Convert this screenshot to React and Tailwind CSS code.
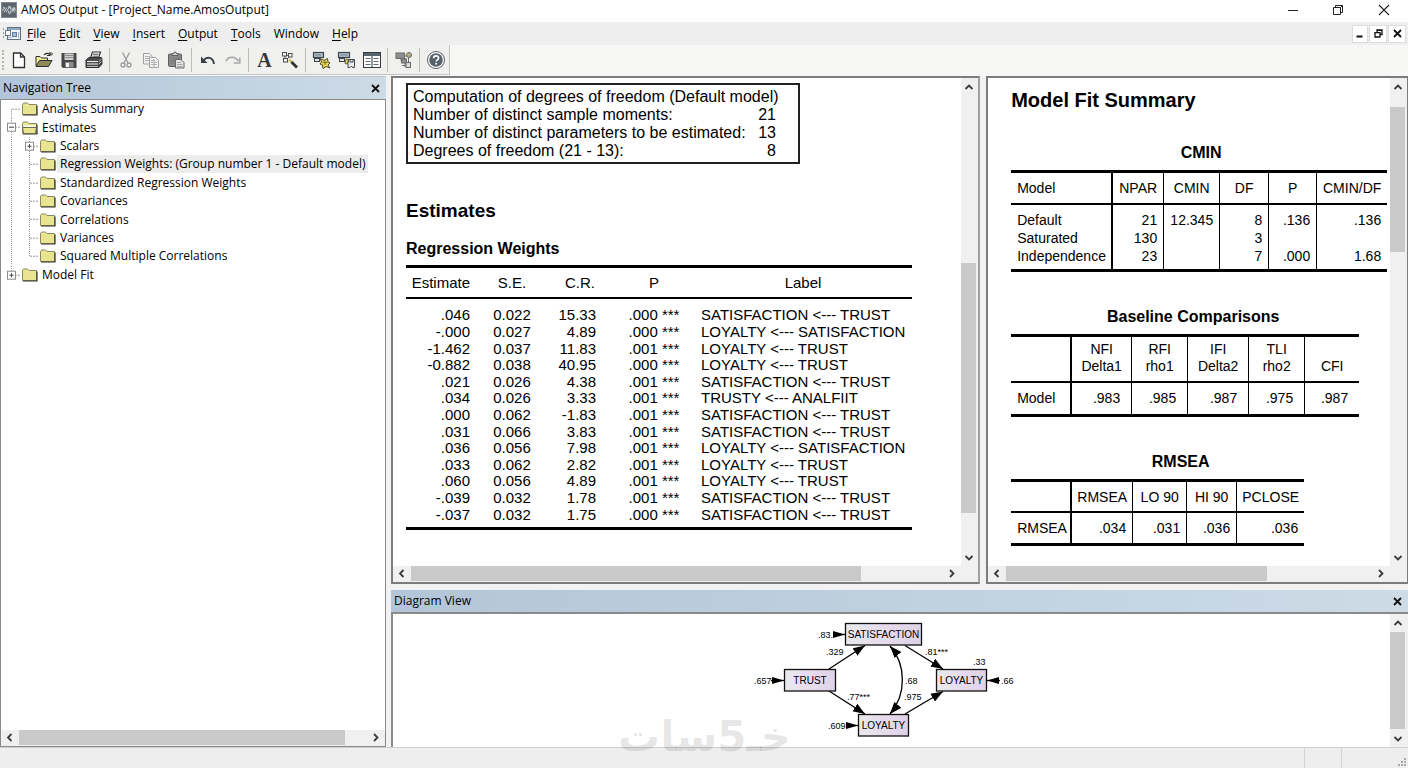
import React from 'react';

const strokeDark = '#2f2f2f';

/* ---------- icons ---------- */

function AppIcon() {
  return (
    <svg width="16" height="16" viewBox="0 0 16 16" aria-hidden="true">
      <rect width="16" height="16" fill="#5d646b" />
      <rect x="0.5" y="0.5" width="15" height="15" fill="none" stroke="#7f878e" />
      <path d="M1 8h2M13 8h2M3 5.5l3 5M6 5.5l-3 5M6.500 8l2-3 2 3-2 3zM10.500 5.500l3 5M13.500 5.500l-3 5" stroke="#c3ccd4" strokeWidth="1" fill="none" />
      <circle cx="3" cy="6" r="1.200" fill="#aeb8c1" />
      <circle cx="8.500" cy="5" r="1.200" fill="#c9d2da" />
      <circle cx="8.500" cy="11" r="1.200" fill="#aeb8c1" />
      <circle cx="13" cy="6.500" r="1.200" fill="#c9d2da" />
    </svg>
  );
}

function DocIcon() {
  return (
    <svg width="20" height="16" viewBox="0 0 20 16" aria-hidden="true">
      <path d="M1.500 2v2M1.500 6v2M1.500 10v2" stroke="#9a9a9a" />
      <rect x="5.500" y="1.500" width="13" height="12" fill="#eef4fa" stroke="#5d7083" />
      <rect x="6" y="2" width="12" height="2" fill="#8fa9c2" />
      <rect x="3.500" y="4.500" width="5" height="5" fill="#fff" stroke="#6d7780" />
      <rect x="10.500" y="6.500" width="4" height="4" fill="#9dbde0" stroke="#5d7fa3" />
      <path d="M16.500 6v6M6 11.500h4" stroke="#9fb2c4" />
    </svg>
  );
}

function NewIcon() {
  return (
    <svg width="20" height="20" viewBox="0 0 20 20" aria-hidden="true">
      <path d="M4.500 3h7l4 4v10.500h-11z" fill="#fff" stroke={strokeDark} strokeWidth="1.300" />
      <path d="M11.500 3v4h4" fill="none" stroke={strokeDark} strokeWidth="1.300" />
    </svg>
  );
}

function OpenIcon() {
  return (
    <svg width="20" height="20" viewBox="0 0 20 20" aria-hidden="true">
      <path d="M2 16V6.500h4l1.500 1.500h6v3" fill="#f3ec9c" stroke={strokeDark} />
      <path d="M2 16.500l3.500-6H18l-3.500 6z" fill="#8d8b58" stroke={strokeDark} />
      <path d="M10 5c1.500-2 4-2.200 5.500-.5M16 2v3.500h-3" fill="none" stroke={strokeDark} strokeWidth="1.100" />
      <circle cx="17.500" cy="4" r="1" fill="none" stroke={strokeDark} strokeWidth="0.800" />
    </svg>
  );
}

function SaveIcon() {
  return (
    <svg width="20" height="20" viewBox="0 0 20 20" aria-hidden="true">
      <path d="M2.500 3h15v15H4L2.500 16.500z" fill="#474747" />
      <rect x="5.500" y="3.500" width="9" height="6.500" fill="#cfcfcf" />
      <path d="M5.500 5.500h9M5.500 7.500h9" stroke="#8d8d8d" />
      <rect x="6" y="12" width="8.500" height="5.500" fill="#8a8a8a" />
      <rect x="7" y="13" width="3" height="4" fill="#f0f0f0" />
    </svg>
  );
}

function PrintIcon() {
  return (
    <svg width="20" height="20" viewBox="0 0 20 20" aria-hidden="true">
      <path d="M6.500 8l2-6h8l-2 6z" fill="#fff" stroke={strokeDark} strokeWidth="1.200" />
      <path d="M9 4.200h5.500M8.500 6.200h5.500" stroke={strokeDark} strokeWidth="0.900" />
      <path d="M2 10l3-2.500h12.500L18 9v5l-3 3.500H2z" fill="#4a4a4a" stroke={strokeDark} />
      <path d="M3 11.500h11M3 14h11" stroke="#f4f4f4" strokeWidth="1.200" />
      <path d="M15 11.500l2.500-2.500M15 14l2.500-2.500" stroke="#d0d0d0" strokeWidth="0.900" />
      <path d="M3 16.500h11" stroke="#cfcfcf" strokeWidth="0.800" />
    </svg>
  );
}

function CutIcon() {
  return (
    <svg width="20" height="20" viewBox="0 0 20 20" aria-hidden="true" fill="none" stroke="#9b9b9b" strokeWidth="1.300">
      <path d="M6.500 2.500l5.500 10.500M13.500 2.500L8 13" />
      <circle cx="7" cy="15" r="2" />
      <circle cx="13" cy="15" r="2" />
    </svg>
  );
}

function CopyIcon() {
  return (
    <svg width="20" height="20" viewBox="0 0 20 20" aria-hidden="true">
      <path d="M2.500 3.500h6l2.500 2.500v8H2.500z" fill="#f2f2f2" stroke="#a2a2a2" />
      <path d="M4 6.500h5M4 8.500h5M4 10.500h4" stroke="#b2b2b2" />
      <path d="M8.500 7.500h6l3 3v7h-9z" fill="#f2f2f2" stroke="#a2a2a2" />
      <path d="M10 10.500h4M10 12.500h6M10 14.500h6M13 9v8" stroke="#b2b2b2" />
    </svg>
  );
}

function PasteIcon() {
  return (
    <svg width="20" height="20" viewBox="0 0 20 20" aria-hidden="true">
      <rect x="2.500" y="4" width="13" height="12.500" rx="1" fill="#8a8a8a" stroke="#5e5e5e" />
      <path d="M6 5.500V3.500h1.500a1.500 1.500 0 013 0H12v2z" fill="#cfcfcf" stroke="#5e5e5e" />
      <path d="M4.500 8h9M4.500 10.500h5M4.500 13h4" stroke="#777" />
      <path d="M9.500 9.500h5.500l3 3v5.500H9.500z" fill="#e4e4e4" stroke="#6b6b6b" />
      <path d="M11 12.500h4M11 14.500h5.500M11 16.500h5.500" stroke="#a5a5a5" />
    </svg>
  );
}

function UndoIcon() {
  return (
    <svg width="20" height="20" viewBox="0 0 20 20" aria-hidden="true">
      <path d="M5.500 10.500c3-4 9.500-4 10.500 3.500" fill="none" stroke="#3a3f45" strokeWidth="1.900" />
      <path d="M3 6.500v6.500h6.500z" fill="#3a3f45" />
    </svg>
  );
}

function RedoIcon() {
  return (
    <svg width="20" height="20" viewBox="0 0 20 20" aria-hidden="true">
      <path d="M3 11c2.500-5 9-5 12.500 0" fill="none" stroke="#a6a6a6" strokeWidth="1.700" />
      <path d="M16.800 7.500v5.500h-6" fill="none" stroke="#a6a6a6" strokeWidth="1.500" />
    </svg>
  );
}

function WandIcon() {
  return (
    <svg width="20" height="20" viewBox="0 0 20 20" aria-hidden="true">
      <g fill="#f4f4f4" stroke="#4b4b4b">
        <rect x="2.500" y="2.500" width="4" height="3.500" />
        <rect x="8.500" y="3.500" width="3.500" height="3.500" />
        <rect x="3.500" y="8.500" width="4" height="3.500" />
      </g>
      <path d="M6.500 5l2 .5M5 6v2.500M9 7l-2 2" stroke="#4b4b4b" />
      <path d="M9 9.500l3 3" stroke="#cfc468" strokeWidth="2.500" />
      <path d="M11.500 12l5.500 5.500" stroke="#333" strokeWidth="2.800" />
    </svg>
  );
}

function ModelAddIcon() {
  return (
    <svg width="20" height="20" viewBox="0 0 20 20" aria-hidden="true">
      <rect x="1.500" y="2.500" width="10" height="5" fill="#aebfca" stroke="#3d444a" strokeWidth="1.200" />
      <path d="M3.500 5h6" stroke="#3d444a" strokeDasharray="1 1" />
      <rect x="2.500" y="8.500" width="5" height="3" fill="#dfe5e9" stroke="#3d444a" />
      <path d="M8 8.500l4 2 3.500-2 .5 3.500 2 1-2 2 2 3-4-1.500-3 2-.5-3.500-2.500-1 1.500-2z" fill="#e8d94e" stroke="#4f4a1c" />
      <path d="M10.500 12.500h5M13 11v4" stroke="#4f4a1c" strokeWidth="0.700" />
    </svg>
  );
}

function ModelSwapIcon() {
  return (
    <svg width="20" height="20" viewBox="0 0 20 20" aria-hidden="true">
      <rect x="1.500" y="2.500" width="11" height="5" fill="#aebfca" stroke="#3d444a" strokeWidth="1.200" />
      <path d="M3.500 5h7" stroke="#3d444a" strokeDasharray="1 1" />
      <rect x="2.500" y="8.500" width="5" height="3" fill="#dfe5e9" stroke="#3d444a" />
      <path d="M9 9l3 .5-2 4.500-2-.5z" fill="#e8d94e" stroke="#4f4a1c" strokeWidth="0.800" />
      <path d="M11.500 9.500h6v8h-2l-1-1.500-1.500 1.500h-2v-4z" fill="#e9edf0" stroke="#3d444a" />
      <path d="M13 9.500v2.500h3V9.500" fill="none" stroke="#3d444a" />
    </svg>
  );
}

function TableIcon() {
  return (
    <svg width="20" height="20" viewBox="0 0 20 20" aria-hidden="true">
      <rect x="1.500" y="2.500" width="17" height="15" fill="#fbfbfb" stroke="#343a40" />
      <rect x="2" y="3" width="16" height="3" fill="#59636c" />
      <path d="M3.500 8.500h5M3.500 11.500h5M3.500 14.500h5M11.500 8.500h5M11.500 11.500h5M11.500 14.500h5" stroke="#60686f" />
      <path d="M10 6v11" stroke="#343a40" />
    </svg>
  );
}

function TreeIcon() {
  return (
    <svg width="20" height="20" viewBox="0 0 20 20" aria-hidden="true">
      <rect x="2" y="3" width="8.500" height="5.500" fill="#8e8e8e" stroke="#6a6a6a" />
      <path d="M10.500 6h3M7 8.500V11h3M11 8v9" fill="none" stroke="#6a6a6a" />
      <circle cx="15" cy="5" r="2.500" fill="#b3ae84" stroke="#6a6a6a" />
      <rect x="7.500" y="9" width="5" height="4" fill="#8e8e8e" stroke="#6a6a6a" />
      <rect x="12" y="12.500" width="4.500" height="5" fill="#d9d9d9" stroke="#6a6a6a" />
      <path d="M8 15.500h4M14.500 8v4" stroke="#6a6a6a" />
    </svg>
  );
}

function HelpIcon() {
  return (
    <svg width="20" height="20" viewBox="0 0 20 20" aria-hidden="true">
      <circle cx="10" cy="10" r="8.500" fill="#fff" stroke="#5a5f64" strokeWidth="1" />
      <circle cx="10" cy="10" r="6.800" fill="#56626d" />
      <path d="M7.600 8.200c0-3.200 5-3 5-.2 0 1.800-2.400 1.800-2.400 3.600" fill="none" stroke="#fff" strokeWidth="1.600" />
      <circle cx="10.200" cy="13.800" r="1" fill="#fff" />
    </svg>
  );
}

function LetterIcon() {
  return <span className="font-['Liberation_Serif',serif] text-[20px] leading-5 font-bold text-[#33383d]">A</span>;
}

function Folder({ open }) {
  return (
    <svg width="16" height="14" viewBox="0 0 16 14" className="shrink-0" aria-hidden="true">
      <path d="M0.500 12.500V2.500l1-1.500h4l1.500 1.500h7.500v10z" fill="#e9e48f" stroke="#8a8864" />
      <path d="M1 13h14V3.500" fill="none" stroke="#37372b" strokeWidth="1.200" />
      {open && (
        <>
          <path d="M1.500 4.500h12v2h-12z" fill="#fbfbf0" />
          <path d="M0.500 6.500h14l-1 6H1.500z" fill="#e9e48f" stroke="#6b6a4c" />
        </>
      )}
    </svg>
  );
}

function Chevron({ dir }) {
  const d = {
    up: 'M1.500 6L5 2.500 8.500 6',
    down: 'M1.500 3L5 6.500 8.500 3',
    left: 'M6.500 1L3 4.500 6.500 8',
    right: 'M3 1l3.500 3.500L3 8',
  }[dir];
  return (
    <svg width="10" height="9" viewBox="0 0 10 9" aria-hidden="true">
      <path d={d} fill="none" stroke="#3c3c3c" strokeWidth="1.800" />
    </svg>
  );
}

function CloseGlyph() {
  return (
    <svg width="9" height="9" viewBox="0 0 9 9" aria-hidden="true">
      <path d="M1 1l7 7M8 1L1 8" stroke="#111" strokeWidth="1.800" />
    </svg>
  );
}

/* ---------- scroll bars ---------- */

function VScroll({ before, thumb, after }) {
  return (
    <div className="flex w-[15px] shrink-0 flex-col bg-[#f0f0f0]">
      <button type="button" aria-label="Scroll up" className="flex h-[18px] items-center justify-center"><Chevron dir="up" /></button>
      <div className={before} />
      <div className={`bg-[#c9c9c9] ${thumb}`} />
      <div className={after} />
      <button type="button" aria-label="Scroll down" className="flex h-[18px] items-center justify-center"><Chevron dir="down" /></button>
    </div>
  );
}

function HScroll({ thumb, after, corner }) {
  return (
    <div className="flex h-[15px] shrink-0 bg-[#f0f0f0]">
      <button type="button" aria-label="Scroll left" className="flex w-[18px] items-center justify-center"><Chevron dir="left" /></button>
      <div className={`bg-[#c9c9c9] ${thumb}`} />
      <div className={after} />
      <button type="button" aria-label="Scroll right" className="flex w-[18px] items-center justify-center"><Chevron dir="right" /></button>
      {corner && <div className="w-[17px]" />}
    </div>
  );
}

/* ---------- window chrome ---------- */

function TitleBar() {
  return (
    <header className="flex h-[22px] items-center bg-white pb-0.5 pl-px">
      <AppIcon />
      <h1 className="ml-1 text-[12px] leading-4">AMOS Output - [Project_Name.AmosOutput]</h1>
      <div className="ml-auto flex">
        <button type="button" aria-label="Minimize" className="flex h-5 w-[45px] items-center justify-center">
          <svg width="12" height="12" viewBox="0 0 12 12"><path d="M1 6.500h10" stroke="#222" /></svg>
        </button>
        <button type="button" aria-label="Restore" className="flex h-5 w-[45px] items-center justify-center">
          <svg width="12" height="12" viewBox="0 0 12 12" fill="none" stroke="#222"><path d="M1.500 3.500h7v7h-7zM3.500 3.500v-2h7v7h-2M8.500 3.500l2-2" /></svg>
        </button>
        <button type="button" aria-label="Close" className="flex h-5 w-[48px] items-center justify-center">
          <svg width="12" height="12" viewBox="0 0 12 12"><path d="M1 1l10 10M11 1L1 11" stroke="#222" strokeWidth="1.100" /></svg>
        </button>
      </div>
    </header>
  );
}

const menus = [
  ['F', 'ile'], ['E', 'dit'], ['V', 'iew'], ['I', 'nsert'],
  ['O', 'utput'], ['T', 'ools'], ['', 'Window'], ['H', 'elp'],
];

function MenuBar() {
  return (
    <nav aria-label="Main menu" className="flex h-[23px] items-center bg-[#eeeeee] pl-0.5">
      <DocIcon />
      <div className="ml-[5px] flex gap-[13px]">
        {menus.map(([key, rest]) => (
          <button type="button" key={rest} className="text-[12px] leading-4">
            <u className="underline-offset-2">{key}</u>{rest}
          </button>
        ))}
      </div>
      <div className="ml-auto flex gap-px pr-0.5">
        <button type="button" aria-label="Minimize document" className="flex h-[18px] w-4 items-center justify-center border border-[#dddddd] bg-white">
          <svg width="8" height="8" viewBox="0 0 8 8"><path d="M0.500 6.500h6" stroke="#111" strokeWidth="2" /></svg>
        </button>
        <button type="button" aria-label="Restore document" className="flex h-[18px] w-[18px] items-center justify-center border border-[#dddddd] bg-white">
          <svg width="9" height="9" viewBox="0 0 9 9" fill="none" stroke="#111" strokeWidth="1.300"><path d="M1 3.700h5V8H1zM3 3.500V1h5v4.500H6M3 1.300h5" /></svg>
        </button>
        <button type="button" aria-label="Close document" className="flex h-[18px] w-[18px] items-center justify-center border border-[#dddddd] bg-white">
          <CloseGlyph />
        </button>
      </div>
    </nav>
  );
}

const toolGroups = [
  [['New', NewIcon], ['Open', OpenIcon], ['Save', SaveIcon], ['Print', PrintIcon]],
  [['Cut', CutIcon], ['Copy', CopyIcon], ['Paste', PasteIcon]],
  [['Undo', UndoIcon], ['Redo', RedoIcon]],
  [['Font', LetterIcon], ['Wizard', WandIcon]],
  [['Add model', ModelAddIcon], ['Swap model', ModelSwapIcon], ['Table view', TableIcon]],
  [['Tree view', TreeIcon]],
  [['Help', HelpIcon]],
];

function Toolbar() {
  return (
    <div className="h-[31px] bg-[#f7f7f6]">
      <div role="toolbar" aria-label="Standard" className="flex h-[30px] w-fit items-center border-r border-b border-[#c4c4c4] bg-[#f0f0ef] pr-px pl-0.5">
        <div className="mr-px h-5 w-[3px] border-l-2 border-dotted border-[#b5b5b5]" />
        {toolGroups.map((group, i) => (
          <div key={group[0][0]} className="flex items-center">
            {i > 0 && <div className="mx-[3px] h-6 w-px bg-[#bdbdbd]" />}
            {group.map(([name, Icon]) => (
              <button type="button" key={name} aria-label={name} className="flex h-6 w-[25px] items-center justify-center">
                <Icon />
              </button>
            ))}
          </div>
        ))}
      </div>
    </div>
  );
}

function PanelHeader({ title, id }) {
  return (
    <div className="flex h-[22px] shrink-0 items-center justify-between bg-linear-to-r from-[#b3c5d8] to-[#ccdbe6] pr-[6px] pl-[3px]">
      <h2 id={id} className="text-[12px] leading-4">{title}</h2>
      <button type="button" aria-label={`Close ${title}`} className="flex h-4 w-[9px] items-center"><CloseGlyph /></button>
    </div>
  );
}

/* ---------- navigation tree ---------- */

const tree = [
  { label: 'Analysis Summary', guides: ['first'] },
  { label: 'Estimates', guides: ['minus'], open: true },
  { label: 'Scalars', guides: ['line', 'plus'] },
  { label: 'Regression Weights: (Group number 1 - Default model)', guides: ['line', 'tee'], selected: true },
  { label: 'Standardized Regression Weights', guides: ['line', 'tee'] },
  { label: 'Covariances', guides: ['line', 'tee'] },
  { label: 'Correlations', guides: ['line', 'tee'] },
  { label: 'Variances', guides: ['line', 'tee'] },
  { label: 'Squared Multiple Correlations', guides: ['line', 'end'] },
  { label: 'Model Fit', guides: ['plusEnd'] },
];

function Guide({ kind }) {
  const top = kind === 'first' ? '50%' : '0';
  const bottom = kind === 'end' || kind === 'plusEnd' ? '50%' : '100%';
  const boxed = kind === 'minus' || kind === 'plus' || kind === 'plusEnd';
  return (
    <svg className="h-full w-[18px] shrink-0" aria-hidden="true">
      <line x1="9.500" x2="9.500" y1={top} y2={bottom} stroke="#9a9a9a" strokeDasharray="1 1" />
      {kind !== 'line' && <line x1="10" x2="19" y1="50%" y2="50%" stroke="#9a9a9a" strokeDasharray="2 1" />}
      {boxed && (
        <svg y="50%" className="overflow-visible">
          <rect x="5.500" y="-4" width="8" height="8" fill="#fff" stroke="#8c8c8c" />
          <path d={kind === 'minus' ? 'M7 0h5' : 'M7.500 0h4M9.500-2v4'} stroke="#444" />
        </svg>
      )}
    </svg>
  );
}

function NavigationTree() {
  return (
    <aside aria-labelledby="nav-title" className="flex w-[386px] shrink-0 flex-col border-t border-[#b9c2ca]">
      <PanelHeader title="Navigation Tree" id="nav-title" />
      <div className="flex flex-1 flex-col border border-[#8a8a8a] bg-white">
        <ul role="tree" className="grid h-[184px] auto-rows-fr pl-px">
          {tree.map((node) => (
            <li key={node.label} role="treeitem" aria-selected={!!node.selected} className="flex items-center">
              {node.guides.map((kind, i) => <Guide key={i} kind={kind} />)}
              <span className="ml-0.5 flex"><Folder open={node.open} /></span>
              <span className={node.selected ? 'ml-px bg-[#ececec] px-[3px] text-[12px] leading-[18px] whitespace-nowrap' : 'ml-1 text-[12px] leading-[18px] whitespace-nowrap'}>{node.label}</span>
            </li>
          ))}
        </ul>
        <div className="flex-1" />
        <HScroll thumb="flex-[325_1_0%]" after="flex-[22_1_0%]" />
        <div className="h-px bg-[#f0f0f0]" />
      </div>
    </aside>
  );
}

/* ---------- estimates document ---------- */

const dof = [
  ['Number of distinct sample moments:', '21'],
  ['Number of distinct parameters to be estimated:', '13'],
  ['Degrees of freedom (21 - 13):', '8'],
];

const weights = [
  ['.046', '0.022', '15.33', '.000 ***', 'SATISFACTION <--- TRUST'],
  ['-.000', '0.027', '4.89', '.000 ***', 'LOYALTY <--- SATISFACTION'],
  ['-1.462', '0.037', '11.83', '.001 ***', 'LOYALTY <--- TRUST'],
  ['-0.882', '0.038', '40.95', '.000 ***', 'LOYALTY <--- TRUST'],
  ['.021', '0.026', '4.38', '.001 ***', 'SATISFACTION <--- TRUST'],
  ['.034', '0.026', '3.33', '.001 ***', 'TRUSTY <--- ANALFIIT'],
  ['.000', '0.062', '-1.83', '.001 ***', 'SATISFACTION <--- TRUST'],
  ['.031', '0.066', '3.83', '.001 ***', 'SATISFACTION <--- TRUST'],
  ['.036', '0.056', '7.98', '.001 ***', 'LOYALTY <--- SATISFACTION'],
  ['.033', '0.062', '2.82', '.001 ***', 'LOYALTY <--- TRUST'],
  ['.060', '0.056', '4.89', '.001 ***', 'LOYALTY <--- TRUST'],
  ['-.039', '0.032', '1.78', '.001 ***', 'SATISFACTION <--- TRUST'],
  ['-.037', '0.032', '1.75', '.000 ***', 'SATISFACTION <--- TRUST'],
];

function EstimatesDocument() {
  return (
    <section className="flex min-w-0 flex-[584_1_0%] flex-col border-2 border-[#7c7c7c] border-r-[#a0a0a0] bg-white">
      <div className="flex flex-1">
        <div className="min-w-0 flex-1 pt-[5px] pl-[13px] font-['Liberation_Sans',Arial,sans-serif]">
          <div className="w-[394px] border-2 border-[#222] pt-[3px] pr-[22px] pb-0.5 pl-[5px] text-[16px] leading-[18px]">
            <p className="whitespace-nowrap">Computation of degrees of freedom (Default model)</p>
            <dl>
              {dof.map(([name, value]) => (
                <div key={name} className="flex justify-between">
                  <dt className="whitespace-nowrap">{name}</dt>
                  <dd>{value}</dd>
                </div>
              ))}
            </dl>
          </div>
          <h2 className="mt-[35px] text-[19px] leading-6 font-bold">Estimates</h2>
          <h3 className="mt-4 text-[16px] leading-5 font-bold">Regression Weights</h3>
          <table className="mt-[6px] h-[265px] w-[506px] table-fixed border-separate border-spacing-0 border-y-3 border-black text-[15px] leading-4">
            <colgroup>
              <col className="w-[80px]" />
              <col className="w-[52px]" />
              <col className="w-[84px]" />
              <col className="w-[64px]" />
              <col />
            </colgroup>
            <thead>
              <tr className="h-[31px]">
                <th className="border-b-2 border-black pr-4 text-right font-normal">Estimate</th>
                <th className="border-b-2 border-black font-normal">S.E.</th>
                <th className="border-b-2 border-black font-normal">C.R.</th>
                <th className="border-b-2 border-black font-normal">P</th>
                <th className="border-b-2 border-black pl-2 font-normal">Label</th>
              </tr>
              <tr className="h-2"><td colSpan={5} /></tr>
            </thead>
            <tbody>
              {weights.map((row, i) => (
                <tr key={i}>
                  <td className="pr-4 text-right">{row[0]}</td>
                  <td className="text-center">{row[1]}</td>
                  <td className="pr-[26px] text-right">{row[2]}</td>
                  <td className="text-center whitespace-nowrap">{row[3]}</td>
                  <td className="pl-[15px] whitespace-nowrap">{row[4]}</td>
                </tr>
              ))}
            </tbody>
            <tfoot>
              <tr className="h-1"><td colSpan={5} /></tr>
            </tfoot>
          </table>
        </div>
        <VScroll before="flex-[166_1_0%]" thumb="flex-[249_1_0%]" after="flex-[35_1_0%]" />
        <div className="w-0.5 bg-[#f0f0f0]" />
      </div>
      <HScroll thumb="flex-[449_1_0%]" after="flex-[82_1_0%]" corner />
      <div className="h-px bg-[#f0f0f0]" />
    </section>
  );
}

/* ---------- model fit document ---------- */

function CminTable() {
  const rows = [
    ['Default', '21', '12.345', '8', '.136', '.136'],
    ['Saturated', '130', '', '3', '', ''],
    ['Independence', '23', '', '7', '.000', '1.68'],
  ];
  const pad = ['pt-[6px]', '', 'pb-1'];
  return (
    <table className="w-[376px] table-fixed border-separate border-spacing-0 border-y-3 border-black text-[14px] leading-[18px]">
      <colgroup>
        <col className="w-[102px]" /><col className="w-[51px]" /><col className="w-[56px]" />
        <col className="w-[49px]" /><col className="w-[48px]" /><col />
      </colgroup>
      <thead>
        <tr className="h-[32px]">
          <th className="border-r-2 border-b-2 border-black pl-[6px] text-left font-normal">Model</th>
          <th className="border-r border-b-2 border-black font-normal">NPAR</th>
          <th className="border-r border-b-2 border-black font-normal">CMIN</th>
          <th className="border-r border-b-2 border-black font-normal">DF</th>
          <th className="border-r border-b-2 border-black font-normal">P</th>
          <th className="border-b-2 border-black font-normal">CMIN/DF</th>
        </tr>
      </thead>
      <tbody>
        {rows.map((row, i) => (
          <tr key={row[0]}>
            <th className={`border-r-2 border-black pl-[6px] text-left font-normal ${pad[i]}`}>{row[0]}</th>
            {row.slice(1).map((value, j) => (
              <td key={j} className={`border-black pr-[6px] text-right ${j < 4 ? 'border-r' : ''} ${pad[i]}`}>{value}</td>
            ))}
          </tr>
        ))}
      </tbody>
    </table>
  );
}

function BaselineTable() {
  const heads = [['NFI', 'Delta1'], ['RFI', 'rho1'], ['IFI', 'Delta2'], ['TLI', 'rho2'], ['', 'CFI']];
  const values = ['.983', '.985', '.987', '.975', '.987'];
  return (
    <table className="w-[348px] table-fixed border-separate border-spacing-0 border-y-3 border-black text-[14px] leading-[17px]">
      <colgroup>
        <col className="w-[61px]" /><col className="w-[60px]" /><col className="w-[56px]" />
        <col className="w-[61px]" /><col className="w-[56px]" /><col />
      </colgroup>
      <thead>
        <tr className="h-[46px] align-bottom">
          <th className="border-r-2 border-b-2 border-black" />
          {heads.map(([a, b], j) => (
            <th key={b} className={`border-b-2 border-black pb-[6px] font-normal ${j < 4 ? 'border-r' : ''}`}>
              {a && <>{a}<br /></>}{b}
            </th>
          ))}
        </tr>
      </thead>
      <tbody>
        <tr className="h-[31px]">
          <th className="border-r-2 border-black pl-[6px] text-left font-normal">Model</th>
          {values.map((value, j) => (
            <td key={j} className={`border-black pr-[11px] text-right ${j < 4 ? 'border-r' : ''}`}>{value}</td>
          ))}
        </tr>
      </tbody>
    </table>
  );
}

function RmseaTable() {
  const heads = ['RMSEA', 'LO 90', 'HI 90', 'PCLOSE'];
  const values = ['.034', '.031', '.036', '.036'];
  return (
    <table className="w-[293px] table-fixed border-separate border-spacing-0 border-y-3 border-black text-[14px] leading-[18px]">
      <colgroup>
        <col className="w-[61px]" /><col className="w-[61px]" /><col className="w-[54px]" />
        <col className="w-[50px]" /><col />
      </colgroup>
      <thead>
        <tr className="h-[31px]">
          <th className="border-r-2 border-b-2 border-black" />
          {heads.map((head, j) => (
            <th key={head} className={`border-b-2 border-black font-normal whitespace-nowrap ${j < 3 ? 'border-r' : ''}`}>{head}</th>
          ))}
        </tr>
      </thead>
      <tbody>
        <tr className="h-[30px]">
          <th className="border-r-2 border-black pl-[6px] text-left font-normal">RMSEA</th>
          {values.map((value, j) => (
            <td key={j} className={`border-black pr-[6px] text-right ${j < 3 ? 'border-r' : ''}`}>{value}</td>
          ))}
        </tr>
      </tbody>
    </table>
  );
}

function ModelFitDocument() {
  return (
    <section className="flex min-w-0 flex-[418_1_0%] flex-col border-2 border-r border-[#7c7c7c] bg-white">
      <div className="flex flex-1">
        <div className="min-w-0 flex-1 pt-[10px] pl-[23px] font-['Liberation_Sans',Arial,sans-serif]">
          <h2 className="text-[20px] leading-6 font-bold">Model Fit Summary</h2>
          <h3 className="mt-[31px] mb-[7px] w-[376px] pl-1 text-center text-[16px] leading-5 font-bold">CMIN</h3>
          <CminTable />
          <h3 className="mt-[35px] mb-[7px] w-[348px] pl-4 text-center text-[16px] leading-5 font-bold">Baseline Comparisons</h3>
          <BaselineTable />
          <h3 className="mt-[35px] mb-[7px] w-[293px] pl-[46px] text-center text-[16px] leading-5 font-bold">RMSEA</h3>
          <RmseaTable />
        </div>
        <VScroll before="flex-[11_1_0%]" thumb="flex-[144_1_0%]" after="flex-[295_1_0%]" />
        <div className="w-0.5 bg-[#f0f0f0]" />
      </div>
      <HScroll thumb="flex-[260_1_0%]" after="flex-[104_1_0%]" corner />
      <div className="h-px bg-[#f0f0f0]" />
    </section>
  );
}

/* ---------- diagram ---------- */

const nodes = [
  { x: 90.5, y: 3.5, w: 76, label: 'SATISFACTION' },
  { x: 29.5, y: 49.5, w: 51, label: 'TRUST' },
  { x: 181.5, y: 49.5, w: 50, label: 'LOYALTY' },
  { x: 103.5, y: 94.5, w: 50, label: 'LOYALTY' },
];

const edgeLabels = [
  [63, 18, '.83.'], [71, 35, '.329'], [170, 35, '.81***'], [218, 45, '.33'],
  [-1, 64, '.657'], [246, 64, '.66'], [150, 64, '.68'],
  [92, 80, '.77***'], [149, 80, '.975'], [73, 109, '.609'],
];

function PathDiagram() {
  return (
    <svg width="262" height="120" viewBox="0 0 262 120" role="img" aria-label="Path diagram" className="overflow-visible">
      <defs>
        <marker id="head" viewBox="0 0 12 10" refX="12" refY="5" markerWidth="12" markerHeight="10" markerUnits="userSpaceOnUse" orient="auto-start-reverse">
          <path d="M0 0.500L12 5 0 9.500z" fill="#000" />
        </marker>
        <marker id="stub" viewBox="0 0 12 8" refX="12" refY="4" markerWidth="12" markerHeight="8" markerUnits="userSpaceOnUse" orient="auto">
          <path d="M0 0.500L12 4 0 7.500z" fill="#000" />
        </marker>
        <linearGradient id="node" x1="0" x2="1">
          <stop offset="0" stopColor="#e9e9ec" />
          <stop offset="0.600" stopColor="#e6d9ec" />
          <stop offset="1" stopColor="#ddd2e6" />
        </linearGradient>
      </defs>
      <g fill="none" stroke="#000" strokeWidth="1.300">
        <path d="M74 49L110 25.500" markerEnd="url(#head)" />
        <path d="M74 71L110 94" markerEnd="url(#head)" />
        <path d="M150 25.500L188 49" markerEnd="url(#head)" />
        <path d="M150 94L188 71.500" markerEnd="url(#head)" />
        <path d="M135 26C151 44 152 74 135 94" markerStart="url(#head)" markerEnd="url(#head)" />
        <path d="M78 14.500h12" markerEnd="url(#stub)" />
        <path d="M16 60.500h13" markerEnd="url(#stub)" />
        <path d="M245 60.500h-13" markerEnd="url(#stub)" />
        <path d="M91 105.500h12" markerEnd="url(#stub)" />
      </g>
      {nodes.map((n, i) => (
        <g key={i}>
          <rect x={n.x} y={n.y} width={n.w} height="21.500" fill="url(#node)" stroke="#111" strokeWidth="1.300" />
          <text x={n.x + n.w / 2} y={n.y + 14.5} textAnchor="middle" fontSize="10" className="font-['Liberation_Sans',Arial,sans-serif]">{n.label}</text>
        </g>
      ))}
      {edgeLabels.map(([x, y, text]) => (
        <text key={text} x={x} y={y} fontSize="9" className="font-['Liberation_Sans',Arial,sans-serif]">{text}</text>
      ))}
    </svg>
  );
}

function DiagramView() {
  return (
    <section aria-labelledby="diagram-title" className="mt-[6px] flex shrink-0 flex-col">
      <PanelHeader title="Diagram View" id="diagram-title" />
      <div className="relative flex border-t-2 border-l-2 border-[#8a8a8a] bg-white">
        <div className="flex flex-1 justify-center pt-[6px] pr-3 pb-[7px]"><PathDiagram /></div>
        <VScroll before="" thumb="flex-1" after="" />
        <div className="w-[3px] bg-[#f0f0f0]" />
        <div dir="rtl" lang="ar" className="absolute top-[101px] left-[225px] flex items-baseline font-['DejaVu_Sans',sans-serif] text-[42px] leading-[44px] font-bold text-black/10">
          <span>خـ</span><span>5</span><span>سات</span>
        </div>
      </div>
    </section>
  );
}

function StatusBar() {
  return (
    <footer className="flex h-[21px] shrink-0 justify-end border-t border-[#cfcfcf] bg-[#eeeeee]">
      <div className="w-[37px] border-l border-[#d4d4d4]" />
      <div className="flex w-[67px] items-end justify-end border-l border-[#d4d4d4] p-px">
        <svg width="10" height="10" viewBox="0 0 10 10" fill="#a8a8a8" aria-hidden="true">
          <path d="M7 1h2v2H7zM4 4h2v2H4zM7 4h2v2H7zM1 7h2v2H1zM4 7h2v2H4zM7 7h2v2H7z" />
        </svg>
      </div>
    </footer>
  );
}

export default function App() {
  return (
    <div className="flex min-h-screen flex-col bg-[#f2f2f2] font-['Open_Sans','Noto_Sans',sans-serif] text-black">
      <TitleBar />
      <MenuBar />
      <Toolbar />
      <main className="flex flex-1 gap-[5px]">
        <NavigationTree />
        <div className="flex min-w-0 flex-1 flex-col">
          <div className="flex flex-1 gap-[6px]">
            <EstimatesDocument />
            <ModelFitDocument />
          </div>
          <DiagramView />
        </div>
      </main>
      <StatusBar />
    </div>
  );
}
